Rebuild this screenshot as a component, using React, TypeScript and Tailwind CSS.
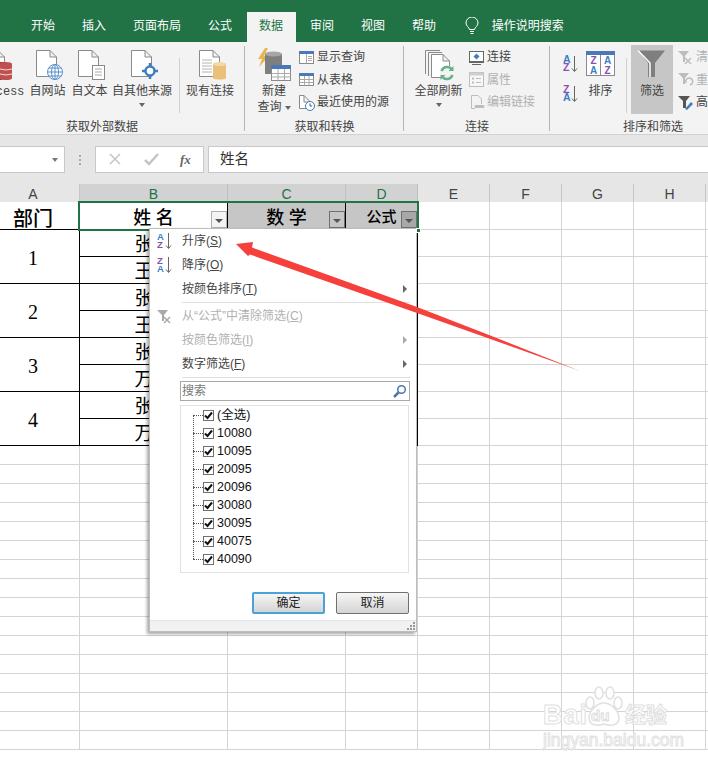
import type { ReactNode } from "react";

const tabs = ["开始", "插入", "页面布局", "公式", "数据", "审阅", "视图", "帮助"];
const filterValues = ["(全选)", "10080", "10095", "20095", "20096", "30080", "30095", "40075", "40090"];
const groups = [
  { dept: "1", a: "张三", b: "王五" },
  { dept: "2", a: "张三", b: "王五" },
  { dept: "3", a: "张三", b: "万六" },
  { dept: "4", a: "张三", b: "万六" },
];

function Page({ x, y = 2, w = 21, h = 27 }: { x: number; y?: number; w?: number; h?: number }) {
  const f = 7;
  return (
    <path
      d={`M${x + 0.5} ${y + 0.5}H${x + w - f}L${x + w - 0.5} ${y + f}V${y + h - 0.5}H${x + 0.5}ZM${x + w - f} ${y + 0.5}V${y + f}H${x + w - 0.5}`}
      fill="#fff"
      stroke="#8a8a8a"
    />
  );
}

function BigButton({ w, ml = 0, label, caret, children }: { w: number; ml?: number; label: ReactNode; caret?: boolean; children: ReactNode }) {
  return (
    <div className="flex shrink-0 flex-col items-center" style={{ width: w, marginLeft: ml }}>
      <svg width={w} height={34} viewBox={`0 0 ${w} 34`} className="mb-[1px] shrink-0">
        {children}
      </svg>
      <div className="whitespace-nowrap text-center text-[12px] leading-[16px] text-[#444]">{label}</div>
      {caret && <div className="mt-[4px] h-0 w-0 border-x-[3.5px] border-t-[4px] border-x-transparent border-t-[#666]" />}
    </div>
  );
}

function SmallRow({ icon, label, disabled }: { icon: ReactNode; label: string; disabled?: boolean }) {
  return (
    <div className={`flex h-[22.5px] items-center gap-[2px] whitespace-nowrap text-[12px] ${disabled ? "text-[#b1b1b1]" : "text-[#444]"}`}>
      <svg width={17} height={17} viewBox="0 0 17 17" className="shrink-0">
        {icon}
      </svg>
      {label}
    </div>
  );
}

function GroupSep() {
  return <div className="mt-[4px] h-[85px] w-px shrink-0 bg-[#b4b4b4]" />;
}

function InnerSep({ ml, mr }: { ml: number; mr: number }) {
  return <div className="mt-[10px] h-[55px] w-px shrink-0 bg-[#d0d0d0]" style={{ marginLeft: ml, marginRight: mr }} />;
}

function Group({ w, label, children }: { w: number; label: string; children: ReactNode }) {
  return (
    <div className="flex h-[93px] shrink-0 flex-col" style={{ width: w }}>
      <div className="flex h-[76.5px]">{children}</div>
      <div className="text-center text-[12px] leading-[16px] text-[#444]">{label}</div>
    </div>
  );
}

function TableIcon() {
  return (
    <g>
      <rect x="1.5" y="2.5" width="14" height="12" fill="#fff" stroke="#8a8a8a" />
      <rect x="1" y="2" width="15" height="3" fill="#4a79b5" />
      <path d="M1.5 8.5H15.5M1.5 11.5H15.5M6.5 5V14.5M11 5V14.5" stroke="#a9a9a9" fill="none" />
    </g>
  );
}

function AzIcon({ flip, size = 9.5 }: { flip?: boolean; size?: number }) {
  const top = flip ? "Z" : "A";
  const bottom = flip ? "A" : "Z";
  return (
    <svg width={18} height={18} viewBox="0 0 18 18" className="shrink-0">
      <text x="1" y="8" fontSize={size} fontWeight="700" fontFamily="Liberation Sans" fill={flip ? "#8a4fb0" : "#3d7fc4"}>{top}</text>
      <text x="1" y="16" fontSize={size} fontWeight="700" fontFamily="Liberation Sans" fill={flip ? "#3d7fc4" : "#8a4fb0"}>{bottom}</text>
      <path d="M12.5 1V16M10 13.5L12.5 16.5L15 13.5" stroke="#666" fill="none" />
    </svg>
  );
}

function Ribbon() {
  return (
    <div className="flex h-[93px] border-b border-[#d2d2d2] bg-[#f3f3f3] pt-0">
      <div className="-ml-[41px] flex">
        <Group w={286} label="获取外部数据">
          <div className="flex pl-[21px] pt-[6px]">
            <BigButton w={45} label={<span className="tracking-[1px]">Access</span>}>
              <Page x={4} />
              <path d="M20 20h6v-6h-6zM10 19h12v13H10z" fill="#a4373a" />
              <ellipse cx="26" cy="16" rx="6" ry="2" fill="#c0504d" />
              <path d="M20 16h12v14c0 1.5-2.5 2-6 2s-6-.5-6-2z" fill="#c0504d" />
              <path d="M20 21q6 2 12 0M20 26q6 2 12 0" stroke="#f3dada" fill="none" />
            </BigButton>
            <BigButton w={37} ml={4} label="自网站">
              <Page x={7} />
              <circle cx="26" cy="24" r="7.5" fill="#fff" stroke="#5b8fc9" />
              <path d="M18.5 24H33.5M26 16.5V31.5M20 20H32M20 28H32" stroke="#5b8fc9" fill="none" />
              <ellipse cx="26" cy="24" rx="3.5" ry="7.5" stroke="#5b8fc9" fill="none" />
            </BigButton>
            <BigButton w={37} ml={5} label="自文本">
              <Page x={7} />
              <rect x="21.5" y="17.5" width="12" height="14" fill="#fff" stroke="#8a8a8a" />
              <path d="M24 21H31M24 24H31M24 27H31" stroke="#a9a9a9" />
            </BigButton>
            <BigButton w={60} ml={4} label="自其他来源" caret>
              <Page x={19} />
              <circle cx="38" cy="23" r="4.5" fill="#fff" stroke="#3f7cc0" strokeWidth="2.5" />
              <path d="M38 15V18M38 28V31M30 23H33M43 23H46" stroke="#3f7cc0" strokeWidth="2.5" />
            </BigButton>
            <InnerSep ml={7} mr={5} />
            <BigButton w={50} label="现有连接">
              <Page x={14} />
              <path d="M17 12H27M17 15H27M17 18H27M17 21H27M17 24H27" stroke="#b4b4b4" />
              <path d="M28 16c0-1.500 13-1.500 13 0v14c0 2-13 2-13 0z" fill="#eac07a" />
              <ellipse cx="34.500" cy="16" rx="6.500" ry="2" fill="#f3d9a8" />
            </BigButton>
          </div>
          <div className="ml-auto">
            <GroupSep />
          </div>
        </Group>
      </div>
      <Group w={159} label="获取和转换">
        <div className="flex pl-[9px] pt-[6px]">
          <BigButton w={40} label={<span>新建<br />查询<span className="ml-[3px] inline-block h-0 w-0 border-x-[3.5px] border-t-[4px] border-x-transparent border-t-[#666] align-middle" /></span>}>
            <path d="M11 0L4 11H8L5 19L15 8H10L14 0Z" fill="#eab54e" />
            <path d="M11 7c0-4 17-4 17 0v19H11z" fill="#7f7f7f" />
            <ellipse cx="19.500" cy="6" rx="8.500" ry="2.500" fill="#a6a6a6" />
            <rect x="17.500" y="17.500" width="19" height="15" fill="#fff" stroke="#8a8a8a" />
            <rect x="17" y="17" width="20" height="4" fill="#4a79b5" />
            <path d="M17.500 25.500H36.500M17.500 29H36.500M24 21V32M30.500 21V32" stroke="#a9a9a9" fill="none" />
          </BigButton>
          <div className="-mt-[2px] ml-[4px]">
            <SmallRow
              label="显示查询"
              icon={
                <g>
                  <rect x="1.500" y="2.500" width="14" height="12" fill="#fff" stroke="#8a8a8a" />
                  <rect x="1" y="2" width="15" height="3" fill="#4a79b5" />
                  <path d="M10 7.500H14M10 9.500H14M10 11.500H14M8.500 5V14.500" stroke="#a9a9a9" fill="none" />
                </g>
              }
            />
            <SmallRow label="从表格" icon={<TableIcon />} />
            <SmallRow
              label="最近使用的源"
              icon={
                <g>
                  <Page x={1} y={1} w={12} h={14} />
                  <circle cx="12" cy="12" r="4.500" fill="#fff" stroke="#3f7cc0" />
                  <path d="M12 9.500V12H14" stroke="#555" fill="none" />
                </g>
              }
            />
          </div>
        </div>
        <div className="ml-auto">
          <GroupSep />
        </div>
      </Group>
      <Group w={146} label="连接">
        <div className="flex pl-[10px] pt-[6px]">
          <BigButton w={49} label="全部刷新" caret>
            <path d="M11.500 2.500H26M11.500 2.500V26M14.500 4.500H28M14.500 4.500V28" stroke="#8a8a8a" fill="none" />
            <Page x={17} y={6} w={19} h={24} />
            <circle cx="33" cy="25" r="7.500" fill="#f3f3f3" />
            <path d="M27.500 23A6 6 0 0 1 38 21.500M38.500 27A6 6 0 0 1 28 28.500" stroke="#6aaf8f" strokeWidth="2.500" fill="none" />
            <path d="M39.500 18V23H34.500ZM26.500 32V27H31.500Z" fill="#6aaf8f" />
          </BigButton>
          <div className="-mt-[2px] ml-[5px]">
            <SmallRow
              label="连接"
              icon={
                <g>
                  <rect x="1.500" y="2.500" width="14" height="10" fill="#fff" stroke="#666" />
                  <path d="M1 13.500H16M4 15.500H13" stroke="#666" />
                  <path d="M8.500 4.500L11.500 7.500L8.500 10.500L5.500 7.500Z" fill="#3f7cc0" />
                </g>
              }
            />
            <SmallRow
              disabled
              label="属性"
              icon={
                <g>
                  <rect x="1.500" y="1.500" width="14" height="14" fill="#f7f7f7" stroke="#bdbdbd" />
                  <rect x="1.500" y="1.500" width="14" height="3" fill="#cfcfcf" />
                  <path d="M8 7.500H13M8 11.500H13" stroke="#bdbdbd" />
                  <rect x="4" y="6.500" width="2" height="2" fill="#bdbdbd" />
                  <rect x="4" y="10.500" width="2" height="2" fill="#bdbdbd" />
                </g>
              }
            />
            <SmallRow
              disabled
              label="编辑链接"
              icon={
                <g>
                  <path d="M3.500 1.500H10L13.500 5V10M3.500 1.500V14.500H7" fill="none" stroke="#bdbdbd" />
                  <path d="M8 12.500h3M12 12.500h3" stroke="#bdbdbd" strokeWidth="3" strokeLinecap="round" />
                </g>
              }
            />
          </div>
        </div>
        <div className="ml-auto">
          <GroupSep />
        </div>
      </Group>
      <Group w={206} label="排序和筛选">
        <div className="flex pt-[6px] pl-[12px]">
          <div className="flex flex-col gap-[12px] pt-[7px]">
            <AzIcon size={10.5} />
            <AzIcon flip size={10.5} />
          </div>
          <div className="ml-[6px]">
            <BigButton w={29} label="排序">
              <rect x="0.500" y="3.500" width="28" height="24" fill="#fff" stroke="#8a8a8a" />
              <rect x="0" y="3" width="29" height="4" fill="#4a79b5" />
              <path d="M14.500 7V27" stroke="#8a8a8a" />
              <text x="7.500" y="16" fontSize="10" textAnchor="middle" fontWeight="700" fontFamily="Liberation Sans" fill="#8a4fb0">Z</text>
              <text x="7.500" y="26" fontSize="10" textAnchor="middle" fontWeight="700" fontFamily="Liberation Sans" fill="#3d7fc4">A</text>
              <text x="21.500" y="16" fontSize="10" textAnchor="middle" fontWeight="700" fontFamily="Liberation Sans" fill="#3d7fc4">A</text>
              <text x="21.500" y="26" fontSize="10" textAnchor="middle" fontWeight="700" fontFamily="Liberation Sans" fill="#8a4fb0">Z</text>
            </BigButton>
          </div>
          <InnerSep ml={11} mr={4} />
          <div className="-mt-[3px] flex h-[69px] w-[42px] flex-col items-center bg-[#c6c6c6] pt-[3px]">
            <BigButton w={42} label="筛选">
              <path d="M7 2.500H34L24 15V29H17V15Z" fill="#7f7f7f" />
              <path d="M7 2.500L19 15V29" stroke="#fff" fill="none" strokeWidth="1.500" />
            </BigButton>
          </div>
          <div className="-mt-[2px] ml-[4px]">
            <SmallRow
              disabled
              label="清除"
              icon={
                <g>
                  <path d="M1 2H12L8 7V13H6V7Z" fill="#bdbdbd" />
                  <path d="M8 9L14 15M14 9L8 15" stroke="#bdbdbd" strokeWidth="1.500" />
                </g>
              }
            />
            <SmallRow
              disabled
              label="重新应用"
              icon={
                <g>
                  <path d="M1 2H12L8 7V13H6V7Z" fill="#bdbdbd" />
                  <path d="M9 12A3.500 3.500 0 1 1 13 14" stroke="#bdbdbd" strokeWidth="1.500" fill="none" />
                </g>
              }
            />
            <SmallRow
              label="高级"
              icon={
                <g>
                  <path d="M1 2H13L9 7V14H6V7Z" fill="#555" />
                  <path d="M8 15L14 8L16 10L10 16Z" fill="#3f7cc0" />
                </g>
              }
            />
          </div>
        </div>
      </Group>
    </div>
  );
}

function FormulaBar() {
  return (
    <div className="flex h-[40px] items-start gap-[4px] bg-[#e6e6e6] pt-[11px]">
      <div className="flex h-[27px] w-[65px] shrink-0 items-center justify-end border border-l-0 border-[#c8c8c8] bg-white pr-[6px]">
        <div className="h-0 w-0 border-x-[3.500px] border-t-[4px] border-x-transparent border-t-[#777]" />
      </div>
      <div className="flex h-[27px] w-[22px] shrink-0 flex-col items-center justify-center gap-[2px]">
        <div className="h-[2px] w-[2px] bg-[#aaa]" />
        <div className="h-[2px] w-[2px] bg-[#aaa]" />
        <div className="h-[2px] w-[2px] bg-[#aaa]" />
      </div>
      <div className="flex h-[27px] w-[109px] shrink-0 items-center border border-[#c8c8c8] bg-white">
        <svg width="107" height="25" viewBox="0 0 107 25">
          <path d="M14 7L24 17M24 7L14 17" stroke="#c4c4c4" strokeWidth="1.500" />
          <path d="M49 13L53 17L62 7" stroke="#c4c4c4" strokeWidth="2.500" fill="none" />
          <text x="84" y="17" fontSize="13" fontStyle="italic" fontWeight="700" fontFamily="Liberation Serif" fill="#666">fx</text>
        </svg>
      </div>
      <div className="flex h-[27px] flex-1 items-center border border-r-0 border-[#c8c8c8] bg-white pl-[11px] text-[14.500px] text-[#333]">
        姓名
      </div>
    </div>
  );
}

function HeaderCell({ label, w, sel }: { label: string; w: number; sel?: boolean }) {
  return (
    <div
      className={`flex h-[18px] shrink-0 items-center justify-center border-r pt-[1px] text-[14px] leading-none ${sel ? "border-[#c0c0c0] bg-[#d2d2d2] text-[#217346]" : "border-[#c6c6c6] text-[#444]"}`}
      style={{ width: w }}
    >
      {label}
    </div>
  );
}

function FilterButton({ tone }: { tone: "white" | "gray" | "dark" }) {
  const cls = tone === "white" ? "bg-[#f4f4f4] border-[#b0b0b0]" : tone === "gray" ? "bg-[#c6c6c6] border-[#707070]" : "bg-[#a8a8a8] border-[#707070]";
  return (
    <div className={`absolute bottom-[1px] right-0 flex h-[17px] w-[16px] items-center justify-center border ${cls}`}>
      <div className="mt-[2px] h-0 w-0 border-x-[4px] border-t-[4px] border-x-transparent border-t-[#555]" />
    </div>
  );
}

function Sheet() {
  const filler = (k: string) => <div key={k} className="border-b border-r border-[#d4d4d4]" />;
  return (
    <div className="-ml-[13px] grid w-[722px] grid-cols-[93px_148px_118px_72px_72px_72px_72px_72px_3px] grid-rows-[28px_repeat(8,27px)_repeat(16,19px)] bg-white font-['Liberation_Serif','Noto_Sans_CJK_SC',serif] text-black">
      <div className="flex items-center justify-center border-b border-r border-black pt-[6px] text-[20px] font-medium">部门</div>
      <div className="relative flex items-center justify-center border-b border-r border-black bg-white pt-[6px] text-[18px] font-medium">
        姓 名
        <FilterButton tone="white" />
      </div>
      <div className="relative flex items-center justify-center border-b border-r border-black bg-[#c6c6c6] pt-[6px] text-[18px] font-medium">
        数 学
        <FilterButton tone="gray" />
      </div>
      <div className="relative flex items-center justify-center border-b border-r border-black bg-[#c6c6c6] pt-[4px] text-[15px] font-medium">
        公式
        <FilterButton tone="dark" />
      </div>
      {["e", "f", "g", "h", "i"].map((k) => filler(`head-${k}`))}
      {groups.map((g) => (
        <div key={g.dept} className="contents">
          <div className="row-span-2 flex items-center justify-center border-b border-r border-black pt-[2px] text-[20px]">{g.dept}</div>
          <div className="flex items-center justify-center border-b border-r border-black pt-[4px] text-[19px]">{g.a}</div>
          <div className="border-b border-r border-black" />
          <div className="border-b border-r border-black" />
          {["e", "f", "g", "h", "i"].map((k) => filler(`${g.dept}-a-${k}`))}
          <div className="flex items-center justify-center border-b border-r border-black pt-[4px] text-[19px]">{g.b}</div>
          <div className="border-b border-r border-black" />
          <div className="border-b border-r border-black" />
          {["e", "f", "g", "h", "i"].map((k) => filler(`${g.dept}-b-${k}`))}
        </div>
      ))}
      {Array.from({ length: 144 }, (_, i) => filler(`blank-${i}`))}
    </div>
  );
}

function MenuItem({ label, hot, icon, disabled, arrow }: { label: string; hot: string; icon?: ReactNode; disabled?: boolean; arrow?: boolean }) {
  return (
    <div className={`relative flex h-[24px] items-center pl-[32px] text-[12px] ${disabled ? "text-[#b1b1b1]" : "text-[#444]"}`}>
      {icon && <div className="absolute left-[6px] top-[3px]">{icon}</div>}
      <span>
        {label}(<span className="underline">{hot}</span>)
      </span>
      {arrow && (
        <div className={`absolute right-[9px] top-[8px] h-0 w-0 border-y-[4px] border-l-[4px] border-y-transparent ${disabled ? "border-l-[#aaa]" : "border-l-[#666]"}`} />
      )}
    </div>
  );
}

function FilterMenu() {
  return (
    <div className="absolute left-[149px] top-[228px] flex h-[404px] w-[268px] flex-col border border-[#bdbdbd] bg-white shadow-[-2px_2px_3px_rgba(0,0,0,0.35)] font-['Liberation_Sans','Noto_Sans_CJK_SC',sans-serif]">
      <MenuItem label="升序" hot="S" icon={<AzIcon />} />
      <MenuItem label="降序" hot="O" icon={<AzIcon flip />} />
      <MenuItem label="按颜色排序" hot="T" arrow />
      <div className="my-px ml-[32px] mr-[6px] h-px bg-[#e0e0e0]" />
      <MenuItem
        label="从“公式”中清除筛选"
        hot="C"
        disabled
        icon={
          <svg width="18" height="18" viewBox="0 0 18 18">
            <path d="M1 3H12L8 8V14H6V8Z" fill="#aaa" />
            <path d="M8 10L14 16M14 10L8 16" stroke="#aaa" strokeWidth="1.500" />
          </svg>
        }
      />
      <MenuItem label="按颜色筛选" hot="I" disabled arrow />
      <MenuItem label="数字筛选" hot="F" arrow />
      <div className="my-px ml-[32px] mr-[6px] h-px bg-[#e0e0e0]" />
      <div className="ml-[30px] mr-[6px] mt-[2px] flex h-[20px] items-center justify-between border border-[#a9a9a9] pl-px pr-[2px] text-[12px] text-[#777]">
        搜索
        <svg width="15" height="15" viewBox="0 0 15 15">
          <circle cx="9.500" cy="5.500" r="3.800" fill="none" stroke="#4a79a8" strokeWidth="1.500" />
          <path d="M6.500 8.500L2 13" stroke="#4a79a8" strokeWidth="2.500" />
        </svg>
      </div>
      <div className="ml-[30px] mr-[7px] mt-[4px] h-[168px] border border-[#e2e2e2] pl-[12px] text-[12.500px] text-[#111]">
        <div className="relative">
          <div className="absolute bottom-[9px] left-0 top-[9px] border-l border-dotted border-[#555]" />
          {filterValues.map((v) => (
            <div key={v} className="flex h-[18px] items-center">
              <div className="w-[10px] border-t border-dotted border-[#555]" />
              <div className="flex h-[11px] w-[11px] items-center justify-center border border-[#707070] bg-white">
                <svg width="9" height="9" viewBox="0 0 9 9">
                  <path d="M1 4.500L3.500 7L8 1.500" stroke="#111" strokeWidth="2" fill="none" />
                </svg>
              </div>
              <span className="ml-[3px]">{v}</span>
            </div>
          ))}
        </div>
      </div>
      <div className="mr-[7px] mt-[19px] flex justify-end gap-[11px] text-[12px] text-[#222]">
        <div className="flex h-[22px] w-[73px] items-center justify-center rounded-[2px] border-2 border-[#4aa3d8] bg-gradient-to-b from-[#f6f6f6] to-[#d4d4d4]">确定</div>
        <div className="flex h-[22px] w-[73px] items-center justify-center rounded-[2px] border border-[#707070] bg-gradient-to-b from-[#f6f6f6] to-[#d4d4d4]">取消</div>
      </div>
      <div className="mt-[6px] flex flex-1 items-end justify-end border-t border-[#dbe6ee] bg-[#f1f1f1] pb-px pr-px">
        <svg width="8" height="8" viewBox="0 0 8 8">
          <path d="M6 0h2v2H6zM3 3h2v2H3zM6 3h2v2H6zM0 6h2v2H0zM3 6h2v2H3zM6 6h2v2H6z" fill="#999" />
        </svg>
      </div>
    </div>
  );
}

function Watermark() {
  return (
    <div className="pointer-events-none absolute left-[543px] top-[686px] h-[62px] w-[126px] font-['Liberation_Sans','Noto_Sans_CJK_SC',sans-serif]">
      <span className="absolute left-0 top-[14px] text-[27px] font-bold leading-[30px] tracking-[1px] text-white [-webkit-text-stroke:1px_#e0e0e0]">Bai</span>
      <svg className="absolute left-[42px] top-0" width="40" height="42" viewBox="0 0 40 42">
        <g fill="#fff" stroke="#e0e0e0" strokeWidth="1.500">
          <ellipse cx="5" cy="17" rx="4" ry="6" />
          <ellipse cx="14" cy="7" rx="4" ry="6" />
          <ellipse cx="25" cy="7" rx="4" ry="6" />
          <ellipse cx="33" cy="17" rx="4" ry="6" />
          <path d="M19 17c7 0 15 8 15 15 0 8-9 8-15 6-6 2-15 2-15-6 0-7 8-15 15-15z" />
        </g>
      </svg>
      <span className="absolute left-[48px] top-[21px] text-[15px] font-bold leading-[18px] text-white [-webkit-text-stroke:1px_#dcdcdc]">du</span>
      <span className="absolute left-[82px] top-[17px] text-[21px] font-bold leading-[24px] text-white [-webkit-text-stroke:1px_#e0e0e0]">经验</span>
      <span className="absolute left-0 top-[45px] whitespace-nowrap text-[17.500px] leading-[18px] text-white [-webkit-text-stroke:1px_#e2e2e2]">jingyan.baidu.com</span>
    </div>
  );
}

export default function App() {
  return (
    <div className="relative h-[762px] w-[708px] overflow-hidden bg-white font-['Liberation_Sans','Noto_Sans_CJK_SC',sans-serif]">
      {/* title bar + tabs */}
      <div className="flex h-[42px] items-end bg-[#217346] pl-[18.500px] text-[12px] text-white">
        <div className="flex gap-[2px]">
          {tabs.map((t) => (
            <div
              key={t}
              className={`flex h-[30px] items-center px-[12.500px] pb-[2px] ${t === "数据" ? "bg-[#f3f3f3] text-[#217346]" : ""}`}
            >
              {t}
            </div>
          ))}
        </div>
        <div className="ml-[16px] flex h-[30px] items-center gap-[13px] pb-[2px]">
          <svg width="14" height="18" viewBox="0 0 14 18">
            <path d="M4.500 12.500C4 10 1 9 1 6a6 6 0 0 1 12 0c0 3-3 4-3.500 6.500zM5 14.500H9M5.500 16.500H8.500" stroke="#fff" fill="none" />
          </svg>
          <span>操作说明搜索</span>
        </div>
      </div>
      <Ribbon />
      <FormulaBar />
      {/* column headers */}
      <div className="-ml-[13px] flex h-[27px] items-end bg-[#e6e6e6]">
        <HeaderCell label="A" w={93} />
        <HeaderCell label="B" w={148} sel />
        <HeaderCell label="C" w={118} sel />
        <HeaderCell label="D" w={72} sel />
        <HeaderCell label="E" w={72} />
        <HeaderCell label="F" w={72} />
        <HeaderCell label="G" w={72} />
        <HeaderCell label="H" w={72} />
      </div>
      <Sheet />
      {/* selection outline */}
      <div className="pointer-events-none absolute left-[78px] top-[201px] h-[30px] w-[341px] border-2 border-[#217346]" />
      <FilterMenu />
      <div className="absolute left-[416px] top-[228px] h-[5px] w-[5px] border border-white bg-[#217346]" />
      {/* annotation arrow */}
      <svg className="pointer-events-none absolute left-0 top-0" width="708" height="762" viewBox="0 0 708 762">
        <polygon points="236,244 253,242 252,247.500 417,307 489,335 580,371 489,338.500 417,313 250,254.500 248,256" fill="#f5403c" />
      </svg>
      <Watermark />
    </div>
  );
}
